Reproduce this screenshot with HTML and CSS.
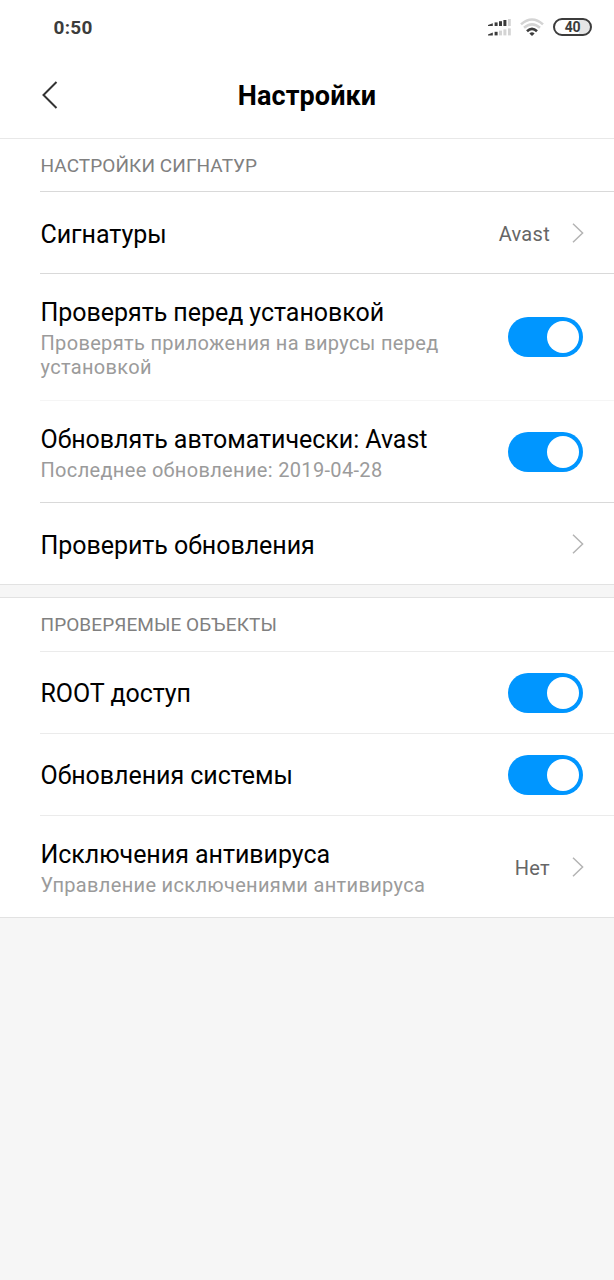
FILE: index.html
```html
<!doctype html>
<html lang="ru">
    <head>
        <title>Настройки</title>
        <meta charset="utf-8">
        <link rel="stylesheet" href="styles.css">
    </head>

    <body>
        <div class="statusbar">
            <span class="time">0:50</span>

            <svg class="signal" width="24" height="18" viewBox="0 0 24 18">
                <g fill="#3c3c3c">
                    <path d="M0 7 L4.8 5.2 V8 H0 Z" />
                    <rect x="6.6" y="4.4" width="3" height="3.6" />
                    <rect x="11" y="3.2" width="3" height="4.8" />
                    <rect x="15.4" y="2" width="3" height="6" />
                    <path d="M0 16.4 L4.8 14.6 V17.4 H0 Z" />
                    <rect x="6.6" y="13.8" width="3" height="3.6" />
                </g>
                <g fill="#d4d4d4">
                    <rect x="20" y="1" width="2.8" height="7" />
                    <rect x="11" y="12.6" width="3" height="4.8" />
                    <rect x="15.4" y="11.4" width="3" height="6" />
                    <rect x="20" y="10.4" width="2.8" height="7" />
                </g>
            </svg>

            <svg class="wifi" width="24" height="18" viewBox="0 0 24 18">
                <g fill="none" stroke-width="2.6">
                    <path d="M1 6.4 Q12 -3.4 23 6.4" stroke="#d4d4d4" />
                    <path d="M4 9.8 Q12 2.8 20 9.8" stroke="#d4d4d4" />
                    <path d="M7 13.2 Q12 8.4 17 13.2" stroke="#3c3c3c" />
                </g>
                <path d="M9.4 15.4 Q12 13.2 14.6 15.4 L12 17.9 Z" fill="#3c3c3c" />
            </svg>

            <span class="battery">40</span>
        </div>

        <header class="header">
            <svg class="back" width="18" height="30" viewBox="0 0 18 30">
                <path d="M15.5 2 L2.5 15 L15.5 28" fill="none" stroke="#333" stroke-width="2" />
            </svg>
            <h1>Настройки</h1>
        </header>

        <section class="group">
            <h2>НАСТРОЙКИ СИГНАТУР</h2>

            <div class="row">
                <div class="text">
                    <p class="name">Сигнатуры</p>
                </div>
                <span class="value">Avast</span>
                <svg class="arrow" width="12" height="20" viewBox="0 0 12 20">
                    <path d="M1 0.8 L10.6 10 L1 19.2" />
                </svg>
            </div>

            <div class="row tall">
                <div class="text">
                    <p class="name">Проверять перед установкой</p>
                    <p class="hint">Проверять приложения на вирусы перед установкой</p>
                </div>
                <span class="switch"></span>
            </div>

            <div class="row double">
                <div class="text">
                    <p class="name">Обновлять автоматически: Avast</p>
                    <p class="hint">Последнее обновление: 2019-04-28</p>
                </div>
                <span class="switch"></span>
            </div>

            <div class="row">
                <div class="text">
                    <p class="name">Проверить обновления</p>
                </div>
                <svg class="arrow" width="12" height="20" viewBox="0 0 12 20">
                    <path d="M1 0.8 L10.6 10 L1 19.2" />
                </svg>
            </div>
        </section>

        <section class="group objects">
            <h2>ПРОВЕРЯЕМЫЕ ОБЪЕКТЫ</h2>

            <div class="row">
                <div class="text">
                    <p class="name">ROOT доступ</p>
                </div>
                <span class="switch"></span>
            </div>

            <div class="row">
                <div class="text">
                    <p class="name">Обновления системы</p>
                </div>
                <span class="switch"></span>
            </div>

            <div class="row double">
                <div class="text">
                    <p class="name">Исключения антивируса</p>
                    <p class="hint">Управление исключениями антивируса</p>
                </div>
                <span class="value">Нет</span>
                <svg class="arrow" width="12" height="20" viewBox="0 0 12 20">
                    <path d="M1 0.8 L10.6 10 L1 19.2" />
                </svg>
            </div>
        </section>
    </body>
</html>
```
FILE: styles.css
```css
* {
    box-sizing: border-box;
}

body {
    margin: 0;
    min-height: 100vh;
    background: #f6f6f6;
    color: #000;
    font-family: Roboto, "Noto Sans", sans-serif;
}

h1, h2, p {
    margin: 0;
    font-weight: 400;
}

.statusbar {
    display: flex;
    align-items: center;
    height: 54px;
    padding: 0 22px 0 53.5px;
    background: #fff;
}

.time {
    flex: 1;
    font-size: 19px;
    font-weight: 700;
    letter-spacing: 0.3px;
    color: #3c3c3c;
}

.wifi {
    margin: 0 9px 0 8px;
}

.battery {
    width: 39px;
    height: 18px;
    border: 2px solid #3c3c3c;
    border-radius: 9px;
    background: linear-gradient(to right, #fff 24px, #e6e6e6 24px);
    font-size: 14px;
    font-weight: 700;
    line-height: 15px;
    letter-spacing: -0.3px;
    text-align: center;
    color: #3c3c3c;
}

.header {
    display: grid;
    grid-template-columns: 60px 1fr 60px;
    align-items: center;
    height: 85px;
    padding-bottom: 3px;
    border-bottom: 1px solid #e8e8e8;
    background: #fff;
}

.back {
    margin-left: 41px;
}

.header h1 {
    padding-top: 2px;
    font-size: 27px;
    font-weight: 700;
    letter-spacing: 0.1px;
    text-align: center;
}

.group {
    padding-left: 40px;
    border-bottom: 1px solid #e2e2e2;
    background: #fff;
}

.objects {
    margin-top: 12px;
    border-top: 1px solid #e2e2e2;
}

.group h2 {
    height: 53px;
    padding-left: 0.5px;
    border-bottom: 1px solid #d9d9d9;
    font-size: 19px;
    line-height: 54px;
    letter-spacing: 0.08px;
    color: #808080;
}

.row {
    display: flex;
    align-items: center;
    height: 82px;
    padding-right: 31px;
    border-bottom: 1px solid #d9d9d9;
}

.tall {
    height: 127px;
    border-color: #f5f5f5;
}

.double {
    height: 102px;
}

.row:last-child {
    height: 81px;
    border-bottom: none;
}

.double:last-child {
    height: 101px;
}

.objects h2 {
    height: 54px;
}

.objects h2,
.objects .row {
    border-color: #ebebeb;
}

.text {
    flex: 1;
    padding: 4px 0 0 0.5px;
}

.objects .text {
    padding-top: 3px;
}

.name {
    font-size: 25px;
    line-height: 32px;
    letter-spacing: -0.04px;
}

.hint {
    max-width: 430px;
    padding-top: 2px;
    font-size: 20px;
    line-height: 24px;
    letter-spacing: 0.33px;
    color: #9b9b9b;
}

.tall .text {
    padding-top: 1px;
}

.double .text {
    padding-top: 2px;
}

.value {
    margin-right: 22px;
    padding-top: 2px;
    font-size: 20px;
    letter-spacing: 0.3px;
    color: #666;
}

.arrow {
    margin-right: -1px;
}

.arrow path {
    fill: none;
    stroke: #b4b4b4;
    stroke-width: 1.5;
}

.switch {
    width: 75px;
    height: 40px;
    padding: 4px;
    border-radius: 20px;
    background: #0096ff;
}

.switch::after {
    content: "";
    display: block;
    width: 32px;
    height: 32px;
    margin-left: auto;
    border-radius: 50%;
    background: #fff;
}
```
